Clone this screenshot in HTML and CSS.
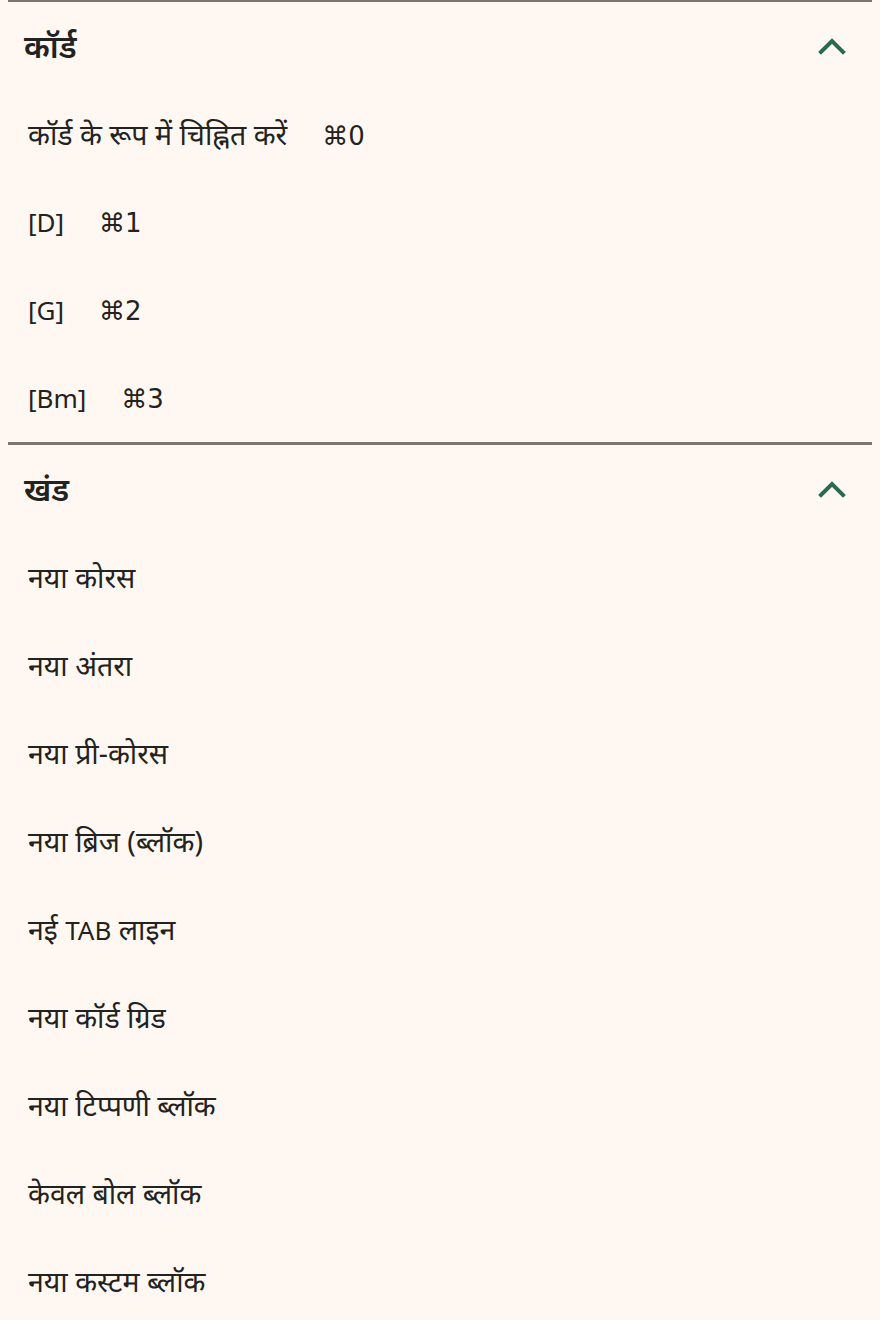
FILE: index.html
```html
<!DOCTYPE html>
<html lang="hi">
<head>
<meta charset="utf-8">
<title>मेनू</title>
<link rel="stylesheet" href="styles.css">
</head>
<body>
<div class="menu">
  <section class="group first">
    <div class="group-head">
      <span class="group-title">कॉर्ड</span>
      <svg class="chev" viewBox="0 0 28 18" width="28" height="18"><polyline points="3,15 14,4 25,15" /></svg>
    </div>
    <div class="item"><div class="line"><span class="label">कॉर्ड के रूप में चिह्नित करें</span><span class="kbd">⌘0</span></div></div>
    <div class="item"><div class="line"><span class="label latin">[D]</span><span class="kbd">⌘1</span></div></div>
    <div class="item"><div class="line"><span class="label latin">[G]</span><span class="kbd">⌘2</span></div></div>
    <div class="item"><div class="line"><span class="label latin">[Bm]</span><span class="kbd">⌘3</span></div></div>
  </section>
  <section class="group">
    <div class="group-head">
      <span class="group-title">खंड</span>
      <svg class="chev" viewBox="0 0 28 18" width="28" height="18"><polyline points="3,15 14,4 25,15" /></svg>
    </div>
    <div class="item"><div class="line"><span class="label">नया कोरस</span></div></div>
    <div class="item"><div class="line"><span class="label">नया अंतरा</span></div></div>
    <div class="item"><div class="line"><span class="label">नया प्री-कोरस</span></div></div>
    <div class="item"><div class="line"><span class="label">नया ब्रिज (ब्लॉक)</span></div></div>
    <div class="item"><div class="line"><span class="label">नई <span class="latin">TAB</span> लाइन</span></div></div>
    <div class="item"><div class="line"><span class="label">नया कॉर्ड ग्रिड</span></div></div>
    <div class="item"><div class="line"><span class="label">नया टिप्पणी ब्लॉक</span></div></div>
    <div class="item"><div class="line"><span class="label">केवल बोल ब्लॉक</span></div></div>
    <div class="item"><div class="line"><span class="label">नया कस्टम ब्लॉक</span></div></div>
  </section>
</div>
</body>
</html>
```
FILE: styles.css
```css
html, body {
  background: #fff8f2;
}
body {
  margin: 0 8px;
  font-family: "Noto Sans", "Noto Sans Devanagari", sans-serif;
  color: #222220;
}
.group {
  border-top: 3px solid #7b766f;
}
.group.first {
  margin-top: -1px;
}
.group-head {
  height: 88px;
  display: flex;
  align-items: center;
  justify-content: space-between;
  padding: 0 26px 0 16px;
}
.group-title {
  font-size: 32px;
  font-weight: 600;
  line-height: 1;
}
.chev {
  fill: none;
  stroke: #2b6a4b;
  stroke-width: 4;
  stroke-linecap: square;
  stroke-linejoin: miter;
}
.item {
  height: 88px;
  display: flex;
  align-items: center;
  padding-left: 20px;
  font-size: 28.5px;
  line-height: 1;
}
.line {
  display: flex;
  align-items: baseline;
  gap: 35px;
}
.latin {
  font-size: 26px;
}
.kbd {
  font-size: 26px;
  font-family: "DejaVu Sans", "Noto Sans", sans-serif;
}
```
